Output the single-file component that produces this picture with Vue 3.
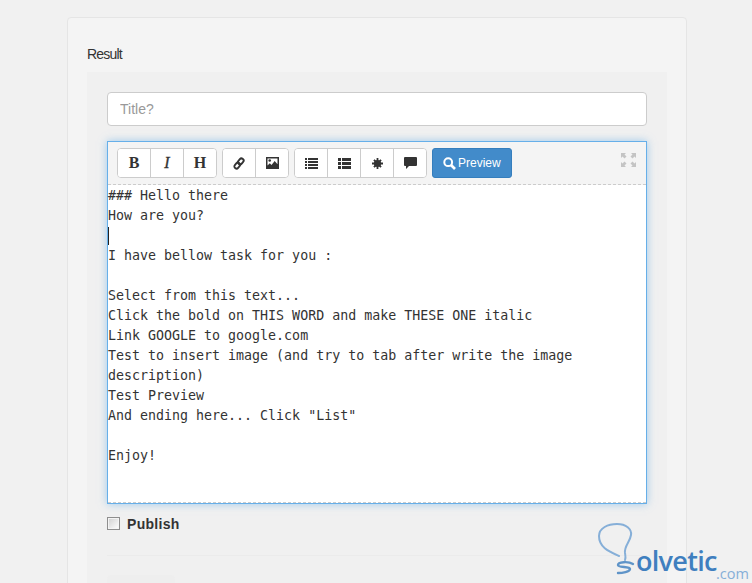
<script setup>
const lines = `### Hello there
How are you?

I have bellow task for you :

Select from this text...
Click the bold on THIS WORD and make THESE ONE italic
Link GOOGLE to google.com
Test to insert image (and try to tab after write the image description)
Test Preview
And ending here... Click "List"

Enjoy!`.split('\n')
</script>

<template>
  <div class="page">
    <section class="card">
      <h2 class="heading">Result</h2>
      <div class="well">
        <input class="title" type="text" placeholder="Title?" />
        <div class="editor">
          <div class="toolbar">
            <div class="group">
              <button class="tool glyph b">B</button>
              <button class="tool glyph i">I</button>
              <button class="tool glyph h">H</button>
            </div>
            <div class="group">
              <button class="tool" aria-label="Link">
                <svg width="12" height="13" viewBox="0 0 14 14" fill="none" stroke="#333" stroke-width="2.2">
                  <rect x="6.6" y="0.9" width="5" height="7.4" rx="2.4" transform="rotate(40 9.1 4.6)" />
                  <rect x="2.4" y="5.7" width="5" height="7.4" rx="2.4" transform="rotate(40 4.9 9.4)" />
                </svg>
              </button>
              <button class="tool" aria-label="Image">
                <svg width="13" height="12" viewBox="0 0 13 12">
                  <path fill="#333" fill-rule="evenodd" d="M0 0h13v12H0zM1.5 1.5v7l2.3-2.2 1.7 1.6 3.2-4 2.8 3.4V1.5z" />
                  <circle cx="3.7" cy="3.5" r="1.3" fill="#333" />
                </svg>
              </button>
            </div>
            <div class="group">
              <button class="tool" aria-label="List">
                <svg width="13" height="11" viewBox="0 0 13 11" fill="#333">
                  <path d="M0 0h2v2H0zM3 0h10v2H3zM0 3h2v2H0zM3 3h10v2H3zM0 6h2v2H0zM3 6h10v2H3zM0 9h2v2H0zM3 9h10v2H3z" />
                </svg>
              </button>
              <button class="tool" aria-label="Numbered list">
                <svg width="13" height="11" viewBox="0 0 13 11" fill="#333">
                  <path d="M0 0h3v3H0zM4 0h9v3H4zM0 4h3v3H0zM4 4h9v3H4zM0 8h3v3H0zM4 8h9v3H4z" />
                </svg>
              </button>
              <button class="tool" aria-label="Code">
                <svg width="11" height="11" viewBox="0 0 11 11" fill="#333">
                  <circle cx="5.5" cy="5.5" r="3.6" />
                  <path d="M4.6 0h1.8v11H4.6zM0 4.6h11v1.8H0z" />
                  <path d="M1.3 2.6l1.3-1.3 7.1 7.1-1.3 1.3zM8.4 1.3l1.3 1.3-7.1 7.1-1.3-1.3z" />
                </svg>
              </button>
              <button class="tool" aria-label="Quote">
                <svg width="13" height="12" viewBox="0 0 13 12" fill="#333">
                  <path d="M1 0h11a1 1 0 0 1 1 1v7a1 1 0 0 1-1 1H5l-3 3V9H1a1 1 0 0 1-1-1V1a1 1 0 0 1 1-1z" />
                </svg>
              </button>
            </div>
            <button class="preview">
              <svg width="13" height="13" viewBox="0 0 13 13" fill="none" stroke="#fff" stroke-width="2">
                <circle cx="5.2" cy="5.2" r="3.9" />
                <path d="M8 8l4 4" stroke-width="2.6" />
              </svg>
              Preview
            </button>
            <svg class="fullscreen" width="15" height="14" viewBox="0 0 15 14" fill="#c4c4c4">
              <path d="M0 0h5L3.5 1.5 5.5 3.5 3.5 5.5 1.5 3.5 0 5zM15 0h-5l1.5 1.5-2 2 2 2 2-2L15 5zM0 14h5l-1.5-1.5 2-2-2-2-2 2L0 9zM15 14h-5l1.5-1.5-2-2 2-2 2 2L15 9z" />
            </svg>
          </div>
          <div class="content">
            <div v-for="(line, n) in lines" :key="n" class="line"><span v-if="n === 2" class="caret"></span>{{ line }}</div>
          </div>
        </div>
        <label class="publish">
          <input class="check" type="checkbox" />
          <span>Publish</span>
        </label>
        <hr class="rule" />
        <div class="ghost"></div>
      </div>
    </section>
    <div class="logo">
      <svg width="44" height="54" viewBox="0 0 44 54" fill="none" stroke="#86afd8" stroke-width="2" stroke-linecap="round" stroke-linejoin="round">
        <path d="M21 33C10 28 1 24 1 13 1 5 10 1 19 1 28 1 34 6 33 12 32 19 26 23 27 30 27.5 33 28 35 27 37" />
        <path stroke="#5f94c8" stroke-width="2.4" d="M35 41C30 38 20 39 20 42 20 45 32 43 32 46 32 49 24 50 20 50" />
      </svg>
      <span class="brand">olvetic</span><span class="tld">.com</span>
    </div>
  </div>
</template>

<style scoped>
.page {
  position: relative;
  height: 583px;
  overflow: hidden;
  padding: 17px 65px 0 67px;
  box-sizing: border-box;
  background: #f1f1f1;
  font-family: "Liberation Sans", Arial, sans-serif;
}
.card {
  height: 700px;
  box-sizing: border-box;
  padding: 0 19px;
  background: #f4f4f4;
  border: 1px solid #e5e5e5;
  border-radius: 4px;
}
.heading {
  margin: 0;
  padding-top: 27px;
  height: 54px;
  box-sizing: border-box;
  font-size: 14px;
  line-height: 18px;
  font-weight: 400;
  letter-spacing: -0.8px;
  color: #333;
}
.well {
  padding: 20px;
  height: 600px;
  background: #f0f0f0;
}
.title {
  display: block;
  width: 100%;
  height: 34px;
  box-sizing: border-box;
  padding: 6px 12px;
  font: 14px/20px "Liberation Sans", Arial, sans-serif;
  background: #fff;
  border: 1px solid #ccc;
  border-radius: 4px;
  color: #555;
}
.title::placeholder {
  color: #999;
  opacity: 1;
}
.editor {
  display: flex;
  flex-direction: column;
  margin-top: 15px;
  height: 363px;
  box-sizing: border-box;
  background: #fff;
  border: 1px solid #66afe9;
  box-shadow: 0 0 8px rgba(102, 175, 233, 0.6);
}
.toolbar {
  display: flex;
  align-items: flex-start;
  gap: 5px;
  height: 43px;
  flex: none;
  box-sizing: border-box;
  padding: 6px 9px 0;
  position: relative;
  background: #f4f4f4;
  border-bottom: 1px dashed #ccc;
}
.group {
  display: flex;
  height: 30px;
  box-sizing: border-box;
  background: #fff;
  border: 1px solid #ccc;
  border-radius: 4px;
  overflow: hidden;
}
.tool {
  display: flex;
  align-items: center;
  justify-content: center;
  width: 33px;
  height: 28px;
  padding: 0;
  background: #fff;
  border: 0;
  border-right: 1px solid #ccc;
  color: #333;
}
.tool:last-child {
  width: 32px;
  border-right: 0;
}
.glyph {
  font: 700 16px/1 "Liberation Serif", "Times New Roman", serif;
}
.i {
  font-style: italic;
  font-weight: 400;
  -webkit-text-stroke: 0.3px #333;
}
.preview {
  display: flex;
  align-items: center;
  gap: 2px;
  width: 80px;
  height: 30px;
  box-sizing: border-box;
  padding: 0 0 0 10px;
  background: #428bca;
  border: 1px solid #357ebd;
  border-radius: 3px;
  color: #fff;
  font: 12px/1 "Liberation Sans", Arial, sans-serif;
}
.fullscreen {
  position: absolute;
  top: 11px;
  right: 10px;
}
.content {
  flex: 1;
  font: 13.3px/20px "DejaVu Sans Mono", monospace;
  color: #333;
  padding-top: 1px;
  border-bottom: 1px dashed #ccc;
}
.line {
  min-height: 20px;
  white-space: pre-wrap;
}
.caret {
  display: block;
  position: absolute;
  width: 1px;
  height: 18px;
  margin-top: 1px;
  background: #222;
}
.publish {
  display: flex;
  align-items: center;
  gap: 7px;
  margin-top: 11px;
  height: 17px;
  font-size: 14px;
  font-weight: 700;
  letter-spacing: 0.3px;
  color: #333;
}
.check {
  appearance: none;
  width: 13px;
  height: 13px;
  margin: 0;
  box-sizing: border-box;
  border: 1px solid #8e8e8e;
  background: linear-gradient(135deg, #cfcfcf, #fff);
  box-shadow: inset 0 0 0 1px #f4f4f4;
}
.rule {
  margin: 23px 0 0;
  border: 0;
  border-top: 1px solid #ebebeb;
}
.ghost {
  width: 68px;
  height: 30px;
  margin-top: 19px;
  background: #eeeeee;
  border-radius: 4px;
}
.logo {
  position: absolute;
  left: 598px;
  top: 523px;
  width: 154px;
  height: 60px;
}
.logo svg {
  position: absolute;
  left: 0;
  top: 0;
}
.brand {
  position: absolute;
  left: 38px;
  top: 23px;
  font: 600 27px/30px "Open Sans", sans-serif;
  letter-spacing: -0.7px;
  color: #3f7fbf;
}
.tld {
  position: absolute;
  left: 118px;
  top: 44px;
  font: 400 14.5px/14px "Open Sans", sans-serif;
  color: #86afd8;
}
</style>
